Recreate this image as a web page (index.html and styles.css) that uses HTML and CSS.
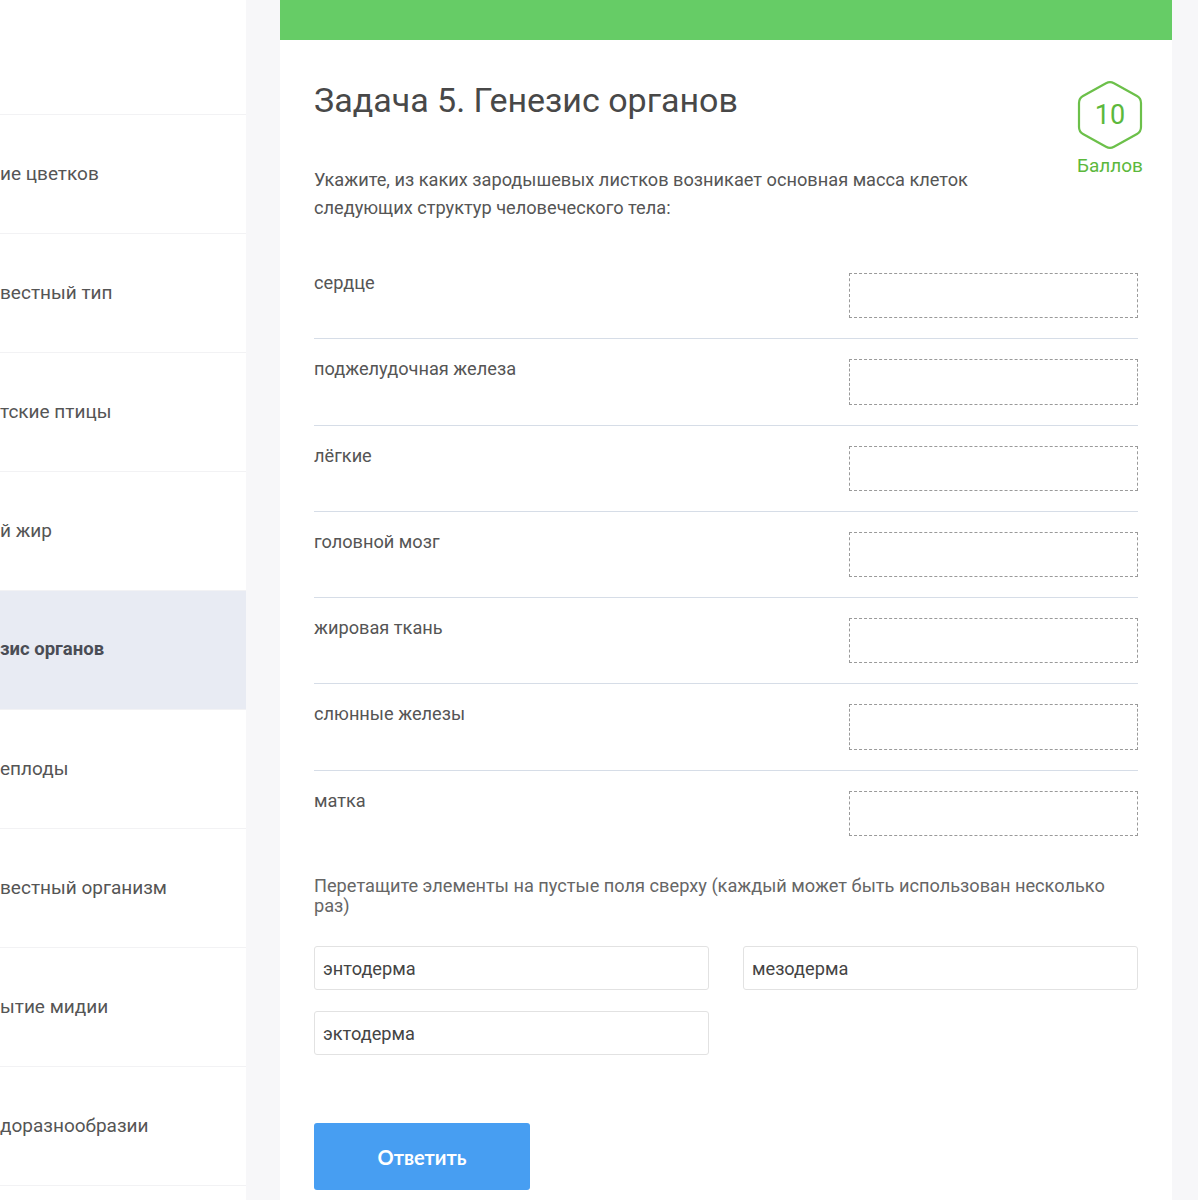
FILE: index.html
```html
<!DOCTYPE html>
<html lang="ru">
<head>
    <meta charset="UTF-8">
    <meta name="viewport" content="width=device-width, initial-scale=1.0">
    <title>Задача 5. Генезис органов</title>
    <link rel="stylesheet" href="styles.css">
</head>
<body>
<div class="page">
    <aside class="menu">
        <div class="menu-top"></div>
        <div class="menu-item">ие цветков</div>
        <div class="menu-item">вестный тип</div>
        <div class="menu-item">тские птицы</div>
        <div class="menu-item">й жир</div>
        <div class="menu-item activo">зис органов</div>
        <div class="menu-item">еплоды</div>
        <div class="menu-item">вестный организм</div>
        <div class="menu-item">ытие мидии</div>
        <div class="menu-item">доразнообразии</div>
    </aside>

    <main class="tarjeta">
        <div class="barra"></div>
        <div class="contenido">
            <div class="cabecera">
                <div>
                    <h1 class="titulo">Задача 5. Генезис органов</h1>
                    <p class="descripcion">Укажите, из каких зародышевых листков возникает основная масса клеток следующих структур человеческого тела:</p>
                </div>
                <div class="puntos">
                    <div class="hexagono">
                        <svg width="66" height="70" viewBox="0 0 66 70">
                            <path d="M29 3.2 Q33 1 37 3.2 L60 16 Q64 18.3 64 23 V47 Q64 51.7 60 54 L37 66.8 Q33 69 29 66.8 L6 54 Q2 51.7 2 47 V23 Q2 18.3 6 16 Z" fill="none" stroke="#6cc04a" stroke-width="2.2" stroke-linejoin="round"/>
                        </svg>
                        <span>10</span>
                    </div>
                    <div class="puntos-texto">Баллов</div>
                </div>
            </div>

            <div class="filas">
                <div class="fila"><span>сердце</span><div class="hueco"></div></div>
                <div class="fila"><span>поджелудочная железа</span><div class="hueco"></div></div>
                <div class="fila"><span>лёгкие</span><div class="hueco"></div></div>
                <div class="fila"><span>головной мозг</span><div class="hueco"></div></div>
                <div class="fila"><span>жировая ткань</span><div class="hueco"></div></div>
                <div class="fila"><span>слюнные железы</span><div class="hueco"></div></div>
                <div class="fila"><span>матка</span><div class="hueco"></div></div>
            </div>

            <p class="instruccion">Перетащите элементы на пустые поля сверху (каждый может быть использован несколько раз)</p>

            <div class="opciones">
                <div class="opcion">энтодерма</div>
                <div class="opcion">мезодерма</div>
                <div class="opcion">эктодерма</div>
            </div>

            <button class="boton">Ответить</button>
        </div>
    </main>
</div>
</body>
</html>
```

FILE: styles.css
```css
/* pagina de la tarea */
body {
    margin: 0;
    background-color: #f7f7f9;
    font-family: Roboto, "Noto Sans", sans-serif;
    color: #555555;
}
.page {
    display: flex;
    align-items: flex-start;
    height: 1200px;
    overflow: hidden;
}
.menu {
    width: 246px;
    flex-shrink: 0;
    background-color: #ffffff;
    min-height: 1200px;
}
.menu-top {
    height: 114px;
    border-bottom: 1px solid #f2f2f4;
}
.menu-item {
    height: 116px;
    display: flex;
    align-items: center;
    padding-bottom: 2px;
    font-size: 19px;
    color: #555555;
    white-space: nowrap;
    border-bottom: 1px solid #f2f2f4;
}
.activo {
    background-color: #e8ebf3;
    font-weight: bold;
    font-size: 18.5px;
    color: #4a4d55;
}
.tarjeta {
    width: 892px;
    margin-left: 34px;
    background-color: #ffffff;
    min-height: 1200px;
}
.barra {
    height: 40px;
    background-color: #66cc66;
}
.contenido {
    padding: 0 34px;
}
.cabecera {
    display: flex;
    justify-content: space-between;
}
.titulo {
    margin: 38px 0 0;
    font-size: 34px;
    font-weight: normal;
    color: #484848;
    line-height: 44px;
}
.descripcion {
    margin: 44px 0 0;
    width: 700px;
    font-size: 18.2px;
    line-height: 28px;
    color: #555555;
}
.puntos {
    margin-top: 40px;
    display: flex;
    flex-direction: column;
    align-items: center;
    margin-right: -5px;
}
.hexagono {
    position: relative;
    width: 66px;
    height: 70px;
}
.hexagono span {
    position: absolute;
    inset: 0;
    display: flex;
    align-items: center;
    justify-content: center;
    font-size: 27px;
    color: #5cb83c;
}
.puntos-texto {
    margin-top: 4px;
    font-size: 19px;
    color: #5cb83c;
}
.filas {
    margin-top: 51px;
}
.fila {
    display: flex;
    justify-content: space-between;
    align-items: flex-start;
    padding: 20px 0 20px;
    border-bottom: 1px solid #d6dde7;
    font-size: 18.2px;
}
.fila:first-child {
    padding-top: 0;
}
.fila:last-child {
    border-bottom: 0;
}
.fila span {
    line-height: 20px;
}
.hueco {
    width: 287px;
    height: 43.3px;
    border: 1px dashed #9a9a9a;
}
.instruccion {
    margin: 20px 0 0;
    font-size: 18.2px;
    line-height: 20px;
    color: #666666;
    width: 824px;
}
.opciones {
    margin-top: 30px;
    display: grid;
    grid-template-columns: 1fr 1fr;
    column-gap: 34px;
    row-gap: 21px;
}
.opcion {
    height: 42px;
    border: 1px solid #e2e2e2;
    border-radius: 3px;
    padding: 0 8px;
    display: flex;
    align-items: center;
    font-size: 18.2px;
    color: #444444;
}
.boton {
    margin-top: 68px;
    width: 216px;
    height: 67px;
    background-color: #479ef2;
    color: #ffffff;
    border: 0;
    border-radius: 3px;
    font-family: Lato, sans-serif;
    font-weight: bold;
    font-size: 20px;
}
```
